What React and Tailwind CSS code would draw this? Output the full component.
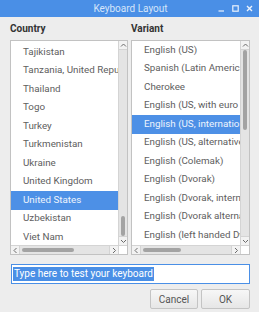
import React from "react";

const font = { fontFamily: "Roboto, 'Liberation Sans', sans-serif" };

function Chev({ dir }) {
  const paths = {
    up: "M1 4.5 L3.5 2 L6 4.5",
    down: "M1 2 L3.5 4.5 L6 2",
    left: "M4.5 1 L2 3.5 L4.5 6",
    right: "M2 1 L4.5 3.5 L2 6",
  };
  return (
    <svg width="7" height="7" viewBox="0 0 7 7" className="block">
      <path d={paths[dir]} fill="none" stroke="#6b6b6b" strokeWidth="1" />
    </svg>
  );
}

function VScroll({ thumbTop, thumbH }) {
  return (
    <div className="w-[9px] flex flex-col bg-[#e4e4e4] border-l border-[#d4d4d4]">
      <div className="h-[9px] flex items-center justify-center bg-[#f2f2f2] border-b border-[#d4d4d4]">
        <Chev dir="up" />
      </div>
      <div className="flex-1 flex flex-col items-center">
        <div
          className="w-[4px] rounded-full bg-[#a3a3a3]"
          style={{ marginTop: thumbTop, height: thumbH }}
        />
      </div>
      <div className="h-[9px] flex items-center justify-center bg-[#f2f2f2] border-t border-[#d4d4d4]">
        <Chev dir="down" />
      </div>
    </div>
  );
}

function HScroll({ thumbLeft, thumbW }) {
  return (
    <div className="h-[9px] flex bg-[#e4e4e4] border-t border-[#d4d4d4]">
      <div className="flex-1 flex">
        <div className="w-[9px] flex items-center justify-center bg-[#f2f2f2] border-r border-[#d4d4d4]">
          <Chev dir="left" />
        </div>
        <div className="flex-1 flex items-center">
          <div
            className="h-[4px] rounded-full bg-[#a3a3a3]"
            style={{ marginLeft: thumbLeft, width: thumbW }}
          />
        </div>
        <div className="w-[9px] flex items-center justify-center bg-[#f2f2f2] border-l border-[#d4d4d4]">
          <Chev dir="right" />
        </div>
      </div>
      <div className="w-[9px] bg-white border-l border-[#d4d4d4]" />
    </div>
  );
}

function List({ items, selected, padTop, vThumb, hThumb }) {
  return (
    <div className="h-[215px] border border-[#c2c2c2] bg-white flex flex-col">
      <div className="flex-1 flex min-h-0">
        <div className="flex-1 overflow-hidden" style={{ paddingTop: padTop }}>
          {items.map((it, i) => (
            <div
              key={i}
              className={
                "h-[18.5px] flex items-center pl-[12px] whitespace-nowrap text-[9.8px] " +
                (i === selected ? "bg-[#4d90e6] text-[#eef4fd]" : "text-[#606060]")
              }
            >
              {it}
            </div>
          ))}
        </div>
        <VScroll thumbTop={vThumb[0]} thumbH={vThumb[1]} />
      </div>
      <HScroll thumbLeft={hThumb[0]} thumbW={hThumb[1]} />
    </div>
  );
}

export default function App() {
  const countries = [
    "Tajikistan",
    "Tanzania, United Republic of",
    "Thailand",
    "Togo",
    "Turkey",
    "Turkmenistan",
    "Ukraine",
    "United Kingdom",
    "United States",
    "Uzbekistan",
    "Viet Nam",
  ];
  const variants = [
    "English (US)",
    "Spanish (Latin American)",
    "Cherokee",
    "English (US, with euro on 5)",
    "English (US, international with dead keys)",
    "English (US, alternative international)",
    "English (Colemak)",
    "English (Dvorak)",
    "English (Dvorak, international with dead keys)",
    "English (Dvorak alternative international no dead keys)",
    "English (left handed Dvorak)",
  ];
  return (
    <div className="w-[259px] h-[312px] bg-[#ededed] flex flex-col overflow-hidden" style={font}>
      <div className="h-[17px] bg-[#4a8fe6] flex items-center relative">
        <div className="flex-1 text-center text-[10px] text-[#d6e5fa] pl-[2px]">Keyboard Layout</div>
        <div className="absolute right-[6px] top-0 h-[17px] flex items-center gap-[7px]">
          <svg width="7" height="7" viewBox="0 0 7 7"><path d="M0.5 6 H6" stroke="#eaf2fd" strokeWidth="1.2" /></svg>
          <svg width="7" height="7" viewBox="0 0 7 7"><rect x="0.8" y="0.8" width="5.4" height="5.4" fill="none" stroke="#eaf2fd" strokeWidth="1.2" /></svg>
          <svg width="7" height="7" viewBox="0 0 7 7"><path d="M1 1 L6 6 M6 1 L1 6" stroke="#eaf2fd" strokeWidth="1.4" /></svg>
        </div>
      </div>
      <div className="flex-1 pl-[10px] pr-[9px] pt-[5px]">
        <div className="grid grid-cols-[118px_119px] gap-x-[3px]">
          <div className="text-[10px] font-bold text-[#333] h-[13px] leading-[13px]">Country</div>
          <div className="text-[10px] font-bold text-[#333] h-[13px] leading-[13px]">Variant</div>
          <div className="mt-[5px]">
            <List items={countries} selected={8} padTop={2} vThumb={[166, 20]} hThumb={[2, 52]} />
          </div>
          <div className="mt-[5px]">
            <List items={variants} selected={4} padTop={0} vThumb={[0, 80]} hThumb={[2, 38]} />
          </div>
        </div>
        <div className="mt-[9px] ml-[1px] h-[20px] border border-[#4a8fe6] bg-white flex items-center px-[1px]">
          <span className="bg-[#4a8fe6] text-white text-[10px] leading-[14px] px-[1px]">Type here to test your keyboard</span>
        </div>
        <div className="mt-[5px] flex justify-end gap-[3px]">
          <button className="w-[48px] h-[20px] border border-[#c4c4c4] rounded-[2px] bg-gradient-to-b from-[#f7f7f7] to-[#e6e6e6] text-[10px] text-[#555]">Cancel</button>
          <button className="w-[49px] h-[20px] border border-[#c4c4c4] rounded-[2px] bg-gradient-to-b from-[#f7f7f7] to-[#e6e6e6] text-[10px] text-[#555]">OK</button>
        </div>
      </div>
    </div>
  );
}
